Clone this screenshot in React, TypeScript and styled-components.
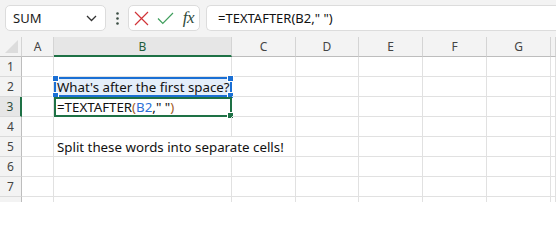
import React from "react";
import styled, { createGlobalStyle, css } from "styled-components";

const GlobalStyle = createGlobalStyle`
  html, body {
    margin: 0;
    padding: 0;
    background: #ffffff;
  }
  body {
    font-family: "Noto Sans", "Open Sans", sans-serif;
  }
`;

const Sheet = styled.div`
  width: 556px;
  height: 202px;
  overflow: hidden;
  background: #f3f3f3;
  display: flex;
  flex-direction: column;
`;

const Toolbar = styled.div`
  height: 37px;
  flex-shrink: 0;
  box-sizing: border-box;
  padding: 5px 0 6px 5px;
  display: flex;
  align-items: stretch;
`;

const Box = styled.div`
  background: #ffffff;
  border: 1px solid #dcdcdc;
  border-radius: 5px;
  box-sizing: border-box;
  display: flex;
  align-items: center;
`;

const NameBox = styled(Box)`
  width: 101px;
  padding: 0 8px 0 7px;
  justify-content: space-between;
  font-size: 13px;
  color: #1b1b1b;
`;

const Dots = styled.div`
  width: 22px;
  display: flex;
  align-items: center;
  justify-content: center;
`;

const FxBox = styled(Box)`
  width: 72px;
  padding: 0 5px 0 5px;
  justify-content: space-between;
`;

const Fx = styled.span`
  font-family: "Liberation Serif", "DejaVu Serif", serif;
  font-style: italic;
  font-size: 17px;
  color: #2f4a3a;
  letter-spacing: -0.5px;
`;

const FormulaBox = styled(Box)`
  flex: 1;
  margin-left: 6px;
  border-right: none;
  border-radius: 5px 0 0 5px;
  padding-left: 11px;
  font-size: 13px;
  color: #111;
`;

const Grid = styled.div`
  flex: 1;
  display: grid;
  grid-template-columns: 22px 32px 178px 64px 63px 64px 64px 64px 1fr;
  grid-auto-rows: 20px;
  background: #ffffff;
`;

const Corner = styled.div`
  background: #f3f3f3;
  border-right: 1px solid #d4d4d4;
  border-bottom: 1px solid #bdbdbd;
  box-sizing: border-box;
  display: flex;
  align-items: flex-end;
  justify-content: flex-end;
  padding: 0 3px 3px 0;
`;

const ColHead = styled.div<{ $active?: boolean }>`
  background: ${(p) => (p.$active ? "#e6e6e6" : "#f3f3f3")};
  border-right: 1px solid #d4d4d4;
  border-bottom: ${(p) => (p.$active ? "2px solid #1e7145" : "1px solid #bdbdbd")};
  box-sizing: border-box;
  display: flex;
  align-items: center;
  justify-content: center;
  font-size: 12px;
  color: ${(p) => (p.$active ? "#1e5c3a" : "#444")};
`;

const RowHead = styled.div<{ $active?: boolean }>`
  background: ${(p) => (p.$active ? "#e6e6e6" : "#f3f3f3")};
  border-right: ${(p) => (p.$active ? "2px solid #1e7145" : "1px solid #bdbdbd")};
  border-bottom: 1px solid #dadada;
  box-sizing: border-box;
  display: flex;
  align-items: center;
  justify-content: center;
  font-size: 12px;
  color: ${(p) => (p.$active ? "#2d4a3a" : "#444")};
`;

const Cell = styled.div<{ $spill?: boolean }>`
  position: relative;
  border-right: ${(p) => (p.$spill ? "1px solid transparent" : "1px solid #e1e1e1")};
  border-bottom: 1px solid #e1e1e1;
  box-sizing: border-box;
  font-size: 13.3px;
  color: #111;
  white-space: nowrap;
  padding: 0 0 0 3px;
  display: flex;
  align-items: center;
  z-index: ${(p) => (p.$spill ? 1 : 0)};
`;

const RefCell = styled(Cell)`
  background: #e4eefa;
  border: 2px solid #1a6fd4;
  padding-left: 1px;
`;

const EditCell = styled(Cell)`
  border: 2px solid #1e7145;
  padding-left: 1px;
`;

const Handle = styled.span<{ $pos: "tl" | "tr" | "bl" | "br"; $color: string }>`
  position: absolute;
  width: 5px;
  height: 5px;
  background: ${(p) => p.$color};
  border: 1px solid #fff;
  ${(p) =>
    p.$pos === "tl"
      ? css`top: -4px; left: -4px;`
      : p.$pos === "tr"
      ? css`top: -4px; right: -4px;`
      : p.$pos === "bl"
      ? css`bottom: -4px; left: -4px;`
      : css`bottom: -4px; right: -4px;`}
`;

const Ref = styled.span`
  color: #2b6fd6;
`;

const Paren = styled.span`
  color: #a25a1c;
`;

const cols = ["A", "B", "C", "D", "E", "F", "G"];

const CrossIcon = () => (
  <svg width="15" height="15" viewBox="0 0 15 15">
    <path d="M1 1L14 14M14 1L1 14" stroke="#d13438" strokeWidth="1.2" fill="none" />
  </svg>
);

const CheckIcon = () => (
  <svg width="17" height="13" viewBox="0 0 17 13">
    <path d="M1 6.5L5.8 11.5L16 1" stroke="#3f9e5c" strokeWidth="1.2" fill="none" />
  </svg>
);

const Chevron = () => (
  <svg width="11" height="7" viewBox="0 0 11 7">
    <path d="M1 1L5.5 5.5L10 1" stroke="#333" strokeWidth="1.3" fill="none" />
  </svg>
);

const VDots = () => (
  <svg width="3" height="13" viewBox="0 0 3 13">
    <circle cx="1.5" cy="1.5" r="1.3" fill="#3b4d43" />
    <circle cx="1.5" cy="6.5" r="1.3" fill="#3b4d43" />
    <circle cx="1.5" cy="11.5" r="1.3" fill="#3b4d43" />
  </svg>
);

const SelectAll = () => (
  <svg width="13" height="13" viewBox="0 0 13 13">
    <path d="M13 0L13 13L0 13Z" fill="#dcdcdc" />
  </svg>
);

const renderRow = (n: number) => {
  const cells: React.ReactNode[] = [];
  for (let c = 0; c < 8; c++) {
    const key = `${n}-${c}`;
    if (n === 2 && c === 1) {
      cells.push(
        <RefCell key={key}>
          What's after the first space?
          <Handle $pos="tl" $color="#1a6fd4" />
          <Handle $pos="tr" $color="#1a6fd4" />
          <Handle $pos="bl" $color="#1a6fd4" />
          <Handle $pos="br" $color="#1a6fd4" />
        </RefCell>
      );
    } else if (n === 3 && c === 1) {
      cells.push(
        <EditCell key={key}>
          =TEXTAFTER<Paren>(</Paren>
          <Ref>B2</Ref>," "<Paren>)</Paren>
          <Handle $pos="br" $color="#1e7145" />
        </EditCell>
      );
    } else if (n === 5 && c === 1) {
      cells.push(
        <Cell key={key} $spill>
          Split these words into separate cells!
        </Cell>
      );
    } else {
      cells.push(<Cell key={key} />);
    }
  }
  return (
    <React.Fragment key={n}>
      <RowHead $active={n === 3}>{n <= 7 ? n : ""}</RowHead>
      {cells}
    </React.Fragment>
  );
};

export default function App() {
  return (
    <>
      <GlobalStyle />
      <Sheet>
        <Toolbar>
          <NameBox>
            <span>SUM</span>
            <Chevron />
          </NameBox>
          <Dots>
            <VDots />
          </Dots>
          <FxBox>
            <CrossIcon />
            <CheckIcon />
            <Fx>fx</Fx>
          </FxBox>
          <FormulaBox>=TEXTAFTER(B2," ")</FormulaBox>
        </Toolbar>
        <Grid>
          <Corner>
            <SelectAll />
          </Corner>
          {cols.map((c) => (
            <ColHead key={c} $active={c === "B"}>
              {c}
            </ColHead>
          ))}
          <ColHead />
          {[1, 2, 3, 4, 5, 6, 7, 8].map(renderRow)}
        </Grid>
      </Sheet>
    </>
  );
}
